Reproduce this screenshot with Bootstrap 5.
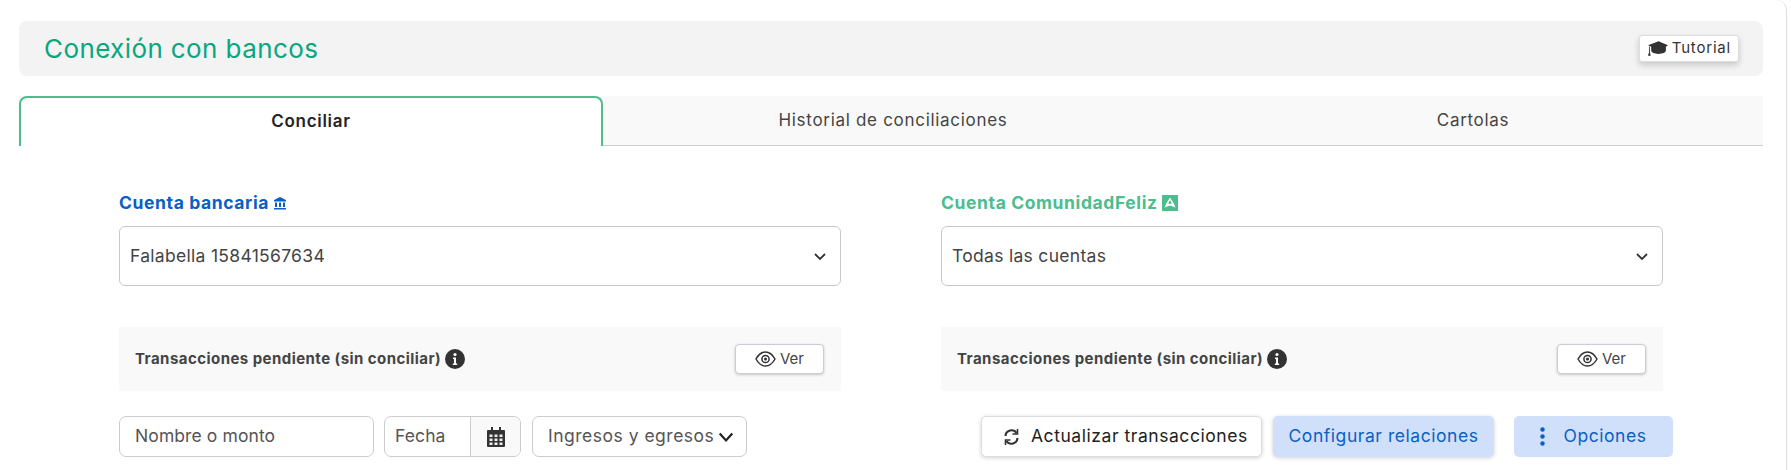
<!DOCTYPE html>
<html lang="es">
<head>
  <meta charset="UTF-8" />
  <meta name="viewport" content="width=device-width, initial-scale=1.0" />
  <title>Conexión con bancos</title>
  <link href="https://cdn.jsdelivr.net/npm/bootstrap@5.3.3/dist/css/bootstrap.min.css" rel="stylesheet" />
  <style>
    html, body { height: 470px; overflow: hidden; }
    body { background: #fff; font-family: Inter, "Open Sans", sans-serif; color: #444; }
    .marco { height: 490px; margin-right: 4px; padding: 21px 23px 0 19px; border-right: 1px solid #ddd; border-top-right-radius: 10px; }
    .cabecera { height: 55px; background: #f3f3f3; border-radius: 8px; padding: 0 25px; }
    .cabecera h1 { font-size: 26px; letter-spacing: .4px; font-weight: 400; color: #0aa67f; margin: 0; }
    .btn-tutorial { height: 27px; padding: 0 7px; font-size: 15px; letter-spacing: .8px; color: #333; background: #fff; border: 1px solid #ddd; border-radius: 3px; box-shadow: 0 3px 6px rgba(0,0,0,.18); margin-right: -1px; }
    .pestanas { height: 50px; margin-top: 20px; background: #f9f9f9; border-bottom: 1px solid #ccc; }
    .pestana { flex: 1 1 0; text-align: center; font-size: 17px; letter-spacing: .7px; line-height: 24px; color: #444; padding-top: 12px; }
    .pestana.activa { height: 50px; background: #fff; border: 2px solid #4dbd8e; border-bottom: 0; border-radius: 8px 8px 0 0; font-weight: 600; color: #222; padding-top: 11px; }
    .zona { padding: 0 100px; margin-top: 46px; display: grid; grid-template-columns: 722px 722px; column-gap: 100px; }
    .etiqueta { font-size: 17.5px; letter-spacing: .6px; font-weight: 700; line-height: 22px; margin-bottom: 12px; }
    .azul { color: #0a5fc4; }
    .verde { color: #4cbd8c; }
    .selector { height: 60px; padding: 0 13px 0 10px; font-size: 17.5px; letter-spacing: .3px; color: #444; border: 1px solid #c8c8c8; border-radius: 6px; }
    .pendiente { height: 64px; margin-top: 41px; padding: 0 17px 0 16px; background: #f9f9f9; font-size: 15px; letter-spacing: .45px; font-weight: 700; color: #444; }
    .btn-ver { width: 89px; height: 30px; padding: 0; font-size: 15px; letter-spacing: 0; font-weight: 400; color: #444; background: #fff; border: 1px solid #c9ced6; border-radius: 4px; box-shadow: 0 1px 3px rgba(0,0,0,.2); }
    .filtros { margin-top: 25px; height: 41px; }
    .caja { flex-shrink: 0; height: 41px; font-size: 17.5px; letter-spacing: .1px; color: #555; background: #fff; border: 1px solid #ccc; border-radius: 7px; padding: 0 15px; }
    .caja-nombre { width: 255px; }
    .caja-fecha { width: 137px; margin-left: 10px; padding: 0; overflow: hidden; }
    .caja-fecha span { flex: 1; padding-left: 10px; }
    .caja-fecha i { width: 50px; height: 100%; background: #f9f9f9; border-left: 1px solid #ccc; }
    .caja-tipo { width: 215px; margin-left: 11px; padding: 0 0 0 15px; letter-spacing: .5px; }
    .accion { flex-shrink: 0; height: 41px; font-size: 17.5px; letter-spacing: .55px; border-radius: 5px; padding: 0; box-shadow: 0 1px 4px rgba(0,0,0,.18); }
    .acc-actualizar { width: 281px; margin-left: 40px; padding-left: 21px; gap: 11px; color: #222; background: #fff; border: 1px solid #ddd; }
    .acc-configurar { width: 221px; margin-left: 11px; color: #0a5fc4; background: #d0dffa; border: 0; }
    .acc-opciones { width: 159px; margin-left: 20px; gap: 18px; color: #0a5fc4; background: #d0dffa; border: 0; box-shadow: none; }
  </style>
</head>
<body>
  <div class="marco">
    <div class="cabecera d-flex align-items-center justify-content-between">
      <h1>Conexión con bancos</h1>
      <button class="btn-tutorial d-flex align-items-center gap-1" type="button">
        <svg width="21" height="17" viewBox="0 0 20 16" fill="#333"><path d="M11 1 1 5l3 1.300V10c0 1.800 3.200 3.200 7 3.200s7-1.400 7-3.200V6.300L20 5z"/><path d="M2 6v5.500L.8 15h2.700l-.7-3.500V6.300z"/></svg>
        Tutorial
      </button>
    </div>

    <div class="pestanas d-flex">
      <div class="pestana activa">Conciliar</div>
      <div class="pestana">Historial de conciliaciones</div>
      <div class="pestana">Cartolas</div>
    </div>

    <div class="zona">
      <div>
        <div class="etiqueta azul d-flex align-items-center gap-1">Cuenta bancaria
          <svg width="14" height="14" viewBox="0 0 14 14" fill="#0a5fc4"><path d="M7 1 1 4v1.500h12V4zM2 6.500h2v4.500H2zM6 6.500h2v4.500H6zM10 6.500h2v4.500h-2zM1 12h12v1.500H1z"/></svg>
        </div>
        <div class="selector d-flex align-items-center justify-content-between">
          Falabella 15841567634
          <svg width="14" height="14" viewBox="0 0 14 14" fill="none" stroke="#333" stroke-width="1.800"><path d="m2 5 5 5 5-5"/></svg>
        </div>
      </div>
      <div>
        <div class="etiqueta verde d-flex align-items-center gap-1">Cuenta ComunidadFeliz
          <svg width="16" height="16" viewBox="0 0 16 16"><rect width="16" height="16" fill="#4cbd8c"/><path d="M8 2.500 4.500 8 2.500 12.500 8 10.500l5.500 2L11.500 8zM8 5l1.800 3.500L8 9 6.200 8.500z" fill="#fff" fill-rule="evenodd"/></svg>
        </div>
        <div class="selector d-flex align-items-center justify-content-between">
          Todas las cuentas
          <svg width="14" height="14" viewBox="0 0 14 14" fill="none" stroke="#333" stroke-width="1.800"><path d="m2 5 5 5 5-5"/></svg>
        </div>
      </div>

      <div class="pendiente d-flex align-items-center justify-content-between">
        <span class="d-flex align-items-center gap-1">Transacciones pendiente (sin conciliar)
          <svg width="20" height="20" viewBox="0 0 20 20"><circle cx="10" cy="10" r="10" fill="#333"/><circle cx="10" cy="5.500" r="1.600" fill="#fff"/><path d="M8 8.500h3v6h1.200v1.500H7.800v-1.500H9v-4.500H8z" fill="#fff"/></svg>
        </span>
        <button class="btn-ver d-flex align-items-center justify-content-center gap-1" type="button">
          <svg width="21" height="16" viewBox="0 0 21 16" fill="none" stroke="#333" stroke-width="1.500"><path d="M1 8c2.500-4.500 5.700-7 9.500-7s7 2.500 9.500 7c-2.500 4.500-5.700 7-9.500 7S3.500 12.500 1 8z"/><circle cx="10.500" cy="8" r="3.600"/><circle cx="10.500" cy="8" r="1.500" fill="#333" stroke="none"/></svg>
          Ver
        </button>
      </div>
      <div class="pendiente d-flex align-items-center justify-content-between">
        <span class="d-flex align-items-center gap-1">Transacciones pendiente (sin conciliar)
          <svg width="20" height="20" viewBox="0 0 20 20"><circle cx="10" cy="10" r="10" fill="#333"/><circle cx="10" cy="5.500" r="1.600" fill="#fff"/><path d="M8 8.500h3v6h1.200v1.500H7.800v-1.500H9v-4.500H8z" fill="#fff"/></svg>
        </span>
        <button class="btn-ver d-flex align-items-center justify-content-center gap-1" type="button">
          <svg width="21" height="16" viewBox="0 0 21 16" fill="none" stroke="#333" stroke-width="1.500"><path d="M1 8c2.500-4.500 5.700-7 9.500-7s7 2.500 9.500 7c-2.500 4.500-5.700 7-9.500 7S3.500 12.500 1 8z"/><circle cx="10.500" cy="8" r="3.600"/><circle cx="10.500" cy="8" r="1.500" fill="#333" stroke="none"/></svg>
          Ver
        </button>
      </div>

      <div class="filtros d-flex">
        <div class="caja caja-nombre d-flex align-items-center">Nombre o monto</div>
        <div class="caja caja-fecha d-flex align-items-center">
          <span>Fecha</span>
          <i class="d-flex align-items-center justify-content-center">
            <svg width="18" height="20" viewBox="0 0 18 20" fill="#333"><path d="M4 0h2v3H4zM12 0h2v3h-2zM1 3h16a1 1 0 0 1 1 1v15a1 1 0 0 1-1 1H1a1 1 0 0 1-1-1V4a1 1 0 0 1 1-1z"/><path d="M2.500 7.500h3v2.500h-3zM7.500 7.500h3v2.500h-3zM12.500 7.500h3v2.500h-3zM2.500 11.500h3V14h-3zM7.500 11.500h3V14h-3zM12.500 11.500h3V14h-3zM2.500 15.500h3V18h-3zM7.500 15.500h3V18h-3zM12.500 15.500h3V18h-3z" fill="#eee"/></svg>
          </i>
        </div>
        <div class="caja caja-tipo d-flex align-items-center gap-1">Ingresos y egresos
          <svg width="16" height="16" viewBox="0 0 14 14" fill="none" stroke="#222" stroke-width="2"><path d="m1.500 4 5.500 6 5.500-6"/></svg>
        </div>
      </div>
      <div class="filtros d-flex">
        <button class="accion acc-actualizar d-flex align-items-center" type="button">
          <svg width="17" height="18" viewBox="0 0 16 18" fill="none" stroke="#333" stroke-width="2.200"><path d="M2 8a6 6 0 0 1 11-3M14 10a6 6 0 0 1-11 3"/><path d="M14 1v5H9M2 17v-5h5" stroke-width="1.600"/></svg>
          Actualizar transacciones
        </button>
        <button class="accion acc-configurar" type="button">Configurar relaciones</button>
        <button class="accion acc-opciones d-flex align-items-center justify-content-center" type="button">
          <svg width="5" height="19" viewBox="0 0 5 19" fill="#0a5fc4"><circle cx="2.500" cy="2.500" r="2.200"/><circle cx="2.500" cy="9.500" r="2.200"/><circle cx="2.500" cy="16.500" r="2.200"/></svg>
          Opciones
        </button>
      </div>
    </div>
  </div>
</body>
</html>
